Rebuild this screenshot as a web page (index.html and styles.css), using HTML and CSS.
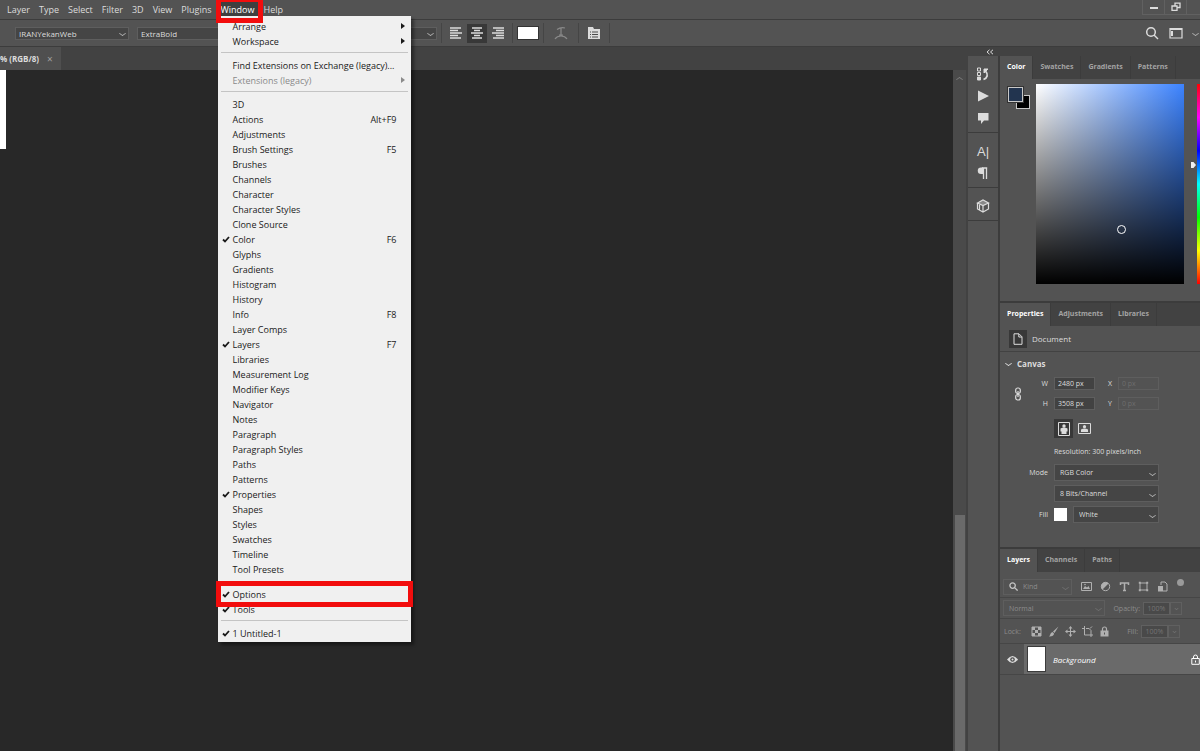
FILE: index.html
```html
<!DOCTYPE html>
<html lang="en">
<head>
    <meta charset="UTF-8">
    <meta name="viewport" content="width=device-width, initial-scale=1.0">
    <title>Untitled-1</title>
    <link rel="stylesheet" href="styles.css">
</head>
<body>
    <header class="menubar">
        <nav class="menus">
            <button>Layer</button>
            <button>Type</button>
            <button>Select</button>
            <button>Filter</button>
            <button>3D</button>
            <button>View</button>
            <button>Plugins</button>
            <div class="menu-open">
                <button class="active">Window</button>
                <div class="dropdown" id="windowMenu"></div>
                <span class="mark mark-window"></span>
            </div>
            <button>Help</button>
        </nav>
        <div class="window-buttons">
            <button aria-label="Minimize"><svg width="10" height="10" viewBox="0 0 10 10"><path d="M1 6h8" stroke="currentColor" stroke-width="2"/></svg></button>
            <button aria-label="Restore"><svg width="10" height="10" viewBox="0 0 10 10" fill="none" stroke="currentColor" stroke-width="1.3"><path d="M1 4h5v4.300H1zM4 4V1.200h5v4.300H6"/></svg></button>
            <button aria-label="Close"></button>
        </div>
    </header>

    <div class="options">
        <span class="select font-family"><select aria-label="Font family"><option>IRANYekanWeb</option></select></span>
        <span class="select font-style"><select aria-label="Font style"><option>ExtraBold</option></select></span>
        <span class="select anti-alias"><select aria-label="Anti-aliasing"><option></option></select></span>
        <div class="option-group">
            <button aria-label="Left align"><svg width="12" height="12" viewBox="0 0 12 12" stroke="currentColor" stroke-width="1.500"><path d="M0 1h11M0 3.500h8M0 6h12M0 8.500h8M0 11h11"/></svg></button>
            <button class="pressed" aria-label="Center"><svg width="12" height="12" viewBox="0 0 12 12" stroke="currentColor" stroke-width="1.500"><path d="M1 1h10M3 3.500h6M0 6h12M3 8.500h6M1 11h10"/></svg></button>
            <button aria-label="Right align"><svg width="12" height="12" viewBox="0 0 12 12" stroke="currentColor" stroke-width="1.500"><path d="M1 1h11M4 3.500h8M0 6h12M4 8.500h8M1 11h11"/></svg></button>
        </div>
        <div class="option-group"><button class="text-color" aria-label="Text color"></button></div>
        <div class="option-group dim">
            <button aria-label="Warp text"><svg width="14" height="14" viewBox="0 0 14 14" fill="none" stroke="currentColor" stroke-width="1.200"><path d="M3 3.500Q7 .8 11 2M7 2v7M5 9h4M1 13q2-3 6-3t6 3"/></svg></button>
        </div>
        <div class="option-group">
            <button aria-label="Character panel"><svg width="14" height="14" viewBox="0 0 14 14"><path fill="currentColor" d="M1 1h5l1 2h6v10H1z"/><path stroke="#4a4a4a" d="M3 6h1M5 6h6M3 8.500h1M5 8.500h6M3 11h1M5 11h6"/></svg></button>
        </div>
        <div class="option-right">
            <button aria-label="Search"><svg width="14" height="14" viewBox="0 0 14 14" fill="none" stroke="currentColor" stroke-width="1.500"><circle cx="6" cy="6" r="4.300"/><path d="M9 9l4 4"/></svg></button>
            <button aria-label="Workspace"><svg width="14" height="12" viewBox="0 0 14 12"><path fill="none" stroke="currentColor" stroke-width="1.200" d="M1 1.500h12v9.500H1z"/><path fill="currentColor" d="M1 1h12v2H1zM2 4h2v5H2z"/></svg></button>
            <i class="chevron"></i>
        </div>
    </div>

    <div class="workspace">
        <main class="document">
            <div class="doc-tabs"><button>% (RGB/8)<span>×</span></button></div>
            <div class="doc-body">
                <div class="canvas"><div class="page"></div></div>
                <div class="scrollbar"><i class="chevron up"></i><div class="thumb"></div></div>
            </div>
        </main>

        <aside class="dock">
            <div class="dock-top"><svg width="8" height="6" viewBox="0 0 8 6" fill="none" stroke="currentColor"><path d="M3.500 .8L1 3l2.500 2.200M7 .8L4.500 3 7 5.200"/></svg></div>
            <div class="dock-body">
                <div class="icon-column">
                    <div class="icon-group">
                        <button aria-label="History"><svg width="14" height="14" viewBox="0 0 14 14" fill="none" stroke="currentColor"><path d="M1.500 1h3v3h-3zM1.500 5.500h3v3h-3z"/><path fill="currentColor" d="M1.500 10h3v3h-3z"/><path stroke-width="1.800" d="M7.500 12.500c4-1.500 5-5 2-8.500"/><path fill="currentColor" d="M8 2h4l-4 4z"/></svg></button>
                        <button aria-label="Actions"><svg width="14" height="14" viewBox="0 0 14 14" fill="currentColor"><path d="M2 1.500L13 7 2 12.500z"/></svg></button>
                        <button aria-label="Comments"><svg width="14" height="14" viewBox="0 0 14 14" fill="currentColor"><path d="M2 2h10.500v7.500H8L5 13V9.500H2z"/></svg></button>
                    </div>
                    <div class="icon-group">
                        <button class="letter" aria-label="Character">A|</button>
                        <button aria-label="Paragraph"><svg width="14" height="14" viewBox="0 0 14 14"><path fill="currentColor" d="M7 1.500H5a3.200 3.200 0 0 0 0 6.500h2z"/><path stroke="currentColor" stroke-width="1.300" d="M7.500 1.500V13M10.500 1.500V13M6 2h5.200"/></svg></button>
                    </div>
                    <div class="icon-group">
                        <button aria-label="3D"><svg width="14" height="14" viewBox="0 0 14 14" fill="none" stroke="currentColor" stroke-width="1.200"><path fill="#888" d="M1.500 4L7 1l5.500 3L7 6.500z"/><path d="M1.500 4v6L7 13l5.500-3V4M7 6.500V13M3.500 5.500v5.500"/></svg></button>
                    </div>
                </div>

                <div class="panels">
                    <section class="panel color-panel">
                        <div class="tabs"><button class="current">Color</button><button>Swatches</button><button>Gradients</button><button>Patterns</button></div>
                        <div class="color-body">
                            <div class="chips"><i class="chip back"></i><i class="chip front"></i></div>
                            <div class="spectrum"><i class="picker"></i></div>
                            <i class="hue-arrow"></i>
                            <div class="hue"></div>
                        </div>
                    </section>

                    <section class="panel properties-panel">
                        <div class="tabs"><button class="current">Properties</button><button>Adjustments</button><button>Libraries</button></div>
                        <div class="doc-kind">
                            <span class="doc-icon"><svg width="12" height="12" viewBox="0 0 12 12" fill="none" stroke="currentColor"><path d="M2 .8h5l3 3v7.500H2zM6.800 1v3H10"/></svg></span>
                            Document
                        </div>
                        <div class="canvas-head"><i class="chevron"></i><b>Canvas</b></div>
                        <div class="dims">
                            <svg class="link" width="8" height="14" viewBox="0 0 8 14" fill="none" stroke="currentColor" stroke-width="1.200"><rect x="1.700" y="1" width="4.600" height="5.500" rx="2"/><rect x="1.700" y="7.500" width="4.600" height="5.500" rx="2"/><path d="M4 4v6"/></svg>
                            <label for="w">W</label><input id="w" value="2480 px">
                            <label for="x">X</label><input id="x" value="0 px" disabled>
                            <label for="h">H</label><input id="h" value="3508 px">
                            <label for="y">Y</label><input id="y" value="0 px" disabled>
                        </div>
                        <div class="orientation">
                            <button class="pressed" aria-label="Portrait"><svg width="12" height="14" viewBox="0 0 12 14"><path fill="none" stroke="currentColor" d="M.5 .5h11v13H.5z"/><circle cx="6" cy="4" r="1.700" fill="currentColor"/><path fill="currentColor" d="M2.500 6.500q3.500-2 7 0v3H8.500V12h-5V9.500h-1z"/></svg></button>
                            <button aria-label="Landscape"><svg width="13" height="11" viewBox="0 0 13 11"><path fill="none" stroke="currentColor" d="M.5 .5h12v10H.5z"/><circle cx="6.500" cy="3.700" r="1.600" fill="currentColor"/><path fill="currentColor" d="M3 9V6.500q3.500-2 7 0V9z"/></svg></button>
                        </div>
                        <div class="resolution">Resolution: 300 pixels/inch</div>
                        <div class="prop-row"><label for="mode">Mode</label><span class="select"><select id="mode"><option>RGB Color</option></select></span></div>
                        <div class="prop-row"><label for="bits"></label><span class="select"><select id="bits" aria-label="Bit depth"><option>8 Bits/Channel</option></select></span></div>
                        <div class="prop-row"><label for="fill">Fill</label><i class="fill-color"></i><span class="select"><select id="fill"><option>White</option></select></span></div>
                    </section>

                    <section class="panel layers-panel">
                        <div class="tabs"><button class="current">Layers</button><button>Channels</button><button>Paths</button></div>
                        <div class="layer-row filter-row">
                            <span class="select kind"><svg width="9" height="9" viewBox="0 0 9 9" fill="none" stroke="#c4c4c4" stroke-width="1.300"><circle cx="3.600" cy="3.600" r="2.700"/><path d="M5.600 5.600l3 3"/></svg><select aria-label="Filter type"><option>Kind</option></select></span>
                            <div class="filters">
                                <button aria-label="Pixel layers"><svg width="11" height="11" viewBox="0 0 11 11"><path fill="none" stroke="currentColor" d="M.5 1.500h10v8H.5z"/><path fill="currentColor" d="M2 8l2-3 2 1.500L7.500 5 9 8z"/><circle cx="4" cy="3.500" r=".8" fill="currentColor"/></svg></button>
                                <button aria-label="Adjustment layers"><svg width="11" height="11" viewBox="0 0 11 11"><circle cx="5.500" cy="5.500" r="4.200" fill="none" stroke="currentColor"/><path fill="currentColor" d="M8.500 2.500a4.200 4.200 0 0 0-6 6z"/></svg></button>
                                <button aria-label="Type layers"><svg width="11" height="11" viewBox="0 0 11 11" fill="none" stroke="currentColor" stroke-width="1.500"><path d="M1.500 4V2h8v2M5.500 2v8M4 9.500h3"/></svg></button>
                                <button aria-label="Shape layers"><svg width="11" height="11" viewBox="0 0 11 11" fill="none" stroke="currentColor"><path d="M2 2h7v7H2z"/><path fill="currentColor" d="M.8 .8h2v2h-2zM8.200 .8h2v2h-2zM.8 8.200h2v2h-2zM8.200 8.200h2v2h-2z" stroke="none"/></svg></button>
                                <button aria-label="Smart objects"><svg width="11" height="11" viewBox="0 0 11 11"><path fill="none" stroke="currentColor" d="M4 4V1h4l2 2v7H6"/><path fill="currentColor" d="M1 5h5v5.500H1z"/></svg></button>
                            </div>
                            <i class="toggle"></i>
                        </div>
                        <div class="layer-row blend-row">
                            <span class="select blend"><select aria-label="Blend mode"><option>Normal</option></select></span>
                            <label for="opacity">Opacity:</label>
                            <input id="opacity" value="100%" disabled><button class="stepper" aria-label="Opacity slider"><i class="chevron"></i></button>
                        </div>
                        <div class="layer-row lock-row">
                            <span class="lock-label">Lock:</span>
                            <div class="locks">
                                <button aria-label="Lock transparency"><svg width="11" height="11" viewBox="0 0 11 11"><path fill="none" stroke="currentColor" d="M1 1h9v9H1z"/><path fill="currentColor" d="M1 1h3v3H1zM7 1h3v3H7zM4 4h3v3H4zM1 7h3v3H1zM7 7h3v3H7z"/></svg></button>
                                <button aria-label="Lock pixels"><svg width="11" height="11" viewBox="0 0 11 11" fill="currentColor"><path d="M10.500 .5L6.500 7 5 5.500zM4.500 6l1.500 1.500c0 2-2 3.200-5 3 1.500-1 1-4 3.500-4.500z"/></svg></button>
                                <button aria-label="Lock position"><svg width="11" height="11" viewBox="0 0 11 11"><path stroke="currentColor" d="M5.500 1v9M1 5.500h9"/><path fill="currentColor" d="M5.500 0l2 2.500h-4zM5.500 11l2-2.500h-4zM0 5.500l2.500-2v4zM11 5.500l-2.500-2v4z"/></svg></button>
                                <button aria-label="Lock artboard"><svg width="11" height="11" viewBox="0 0 11 11" fill="none" stroke="currentColor"><path d="M2.500 0v9H11M0 2.500h2M4 2.500h3l2 2V11M8 2.500L10 .5"/></svg></button>
                                <button aria-label="Lock all"><svg width="11" height="11" viewBox="0 0 11 11"><path fill="currentColor" d="M1.500 4.500h8V10.500h-8z"/><path fill="none" stroke="currentColor" stroke-width="1.200" d="M3.500 5V3a2 2 0 0 1 4 0v2"/><path fill="#535353" d="M5 6.500h1v2H5z"/></svg></button>
                            </div>
                            <label for="layerFill">Fill:</label>
                            <input id="layerFill" value="100%" disabled><button class="stepper" aria-label="Fill slider"><i class="chevron"></i></button>
                        </div>
                        <div class="layer">
                            <button class="eye" aria-label="Visibility"><svg width="11" height="9" viewBox="0 0 11 9"><path fill="currentColor" d="M0 4.500Q5.500-2.500 11 4.500 5.500 11.500 0 4.500z"/><circle cx="5.500" cy="4.500" r="2.300" fill="#4d4d4d"/><circle cx="5.500" cy="4.500" r="1" fill="currentColor"/></svg></button>
                            <div class="layer-name"><i class="layer-thumb"></i><em>Background</em>
                                <svg width="9" height="11" viewBox="0 0 9 11" fill="none" stroke="currentColor"><path d="M.8 4.500h7.500v5.800H.8zM2.500 4.500V3a2 2 0 0 1 4 0v1.500M4.500 6.500v2"/></svg></div>
                        </div>
                    </section>
                </div>
            </div>
        </aside>
    </div>

    <script src="script.js"></script>
</body>
</html>
```

FILE: styles.css
```css
* {
    box-sizing: border-box;
}
body {
    margin: 0;
    height: 100vh;
    display: flex;
    flex-direction: column;
    overflow: hidden;
    background-color: #282828;
    color: #dcdcdc;
    font-family: 'Open Sans', 'Noto Sans', sans-serif;
    font-size: 7px;
}
button, input, select {
    font: inherit;
    color: inherit;
    background: none;
    border: none;
    border-radius: 0;
    margin: 0;
    padding: 0;
}
button {
    display: flex;
    align-items: center;
    justify-content: center;
    flex: none;
}
svg {
    display: block;
    flex: none;
}
.chevron {
    flex: none;
    width: 5px;
    height: 5px;
    border-right: 1px solid currentColor;
    border-bottom: 1px solid currentColor;
    transform: scaleY(0.7) rotate(45deg);
}
.chevron.up {
    transform: scaleY(0.7) rotate(225deg);
}

/* drop-downs */
.select {
    position: relative;
    display: flex;
    align-items: center;
    background-color: #454545;
    border: 1px solid #5e5e5e;
}
.select select {
    appearance: none;
    flex: 1;
    min-width: 0;
    height: 100%;
    padding: 0 5px;
    opacity: 1;
}
.select::after {
    content: "";
    position: absolute;
    right: 3px;
    top: 50%;
    width: 4px;
    height: 4px;
    margin-top: -2px;
    border-right: 1px solid #b0b0b0;
    border-bottom: 1px solid #b0b0b0;
    transform: scaleY(0.7) rotate(45deg);
    pointer-events: none;
}

/* menu bar */
.menubar {
    display: flex;
    justify-content: space-between;
    flex: none;
    height: 20px;
    background-color: #535353;
    border-bottom: 1px solid #3c3c3c;
    font-size: 9px;
}
.menus {
    display: flex;
    padding-left: 3px;
}
.menus button {
    height: 18px;
    padding: 0 5px 0 4px;
}
.menu-open {
    position: relative;
}
.menu-open .active {
    background-color: #3f3f3f;
    color: #fff;
}
.mark {
    position: absolute;
    border: 5px solid #f20d0d;
    pointer-events: none;
    z-index: 3;
}
.mark-window {
    inset: -3px -3px -4px -1px;
}
.window-buttons {
    display: flex;
}
.window-buttons button {
    width: 22px;
    height: 15px;
    border: 1px solid #616161;
    border-top: none;
    border-right: none;
}
.window-buttons button:last-child {
    width: 14px;
}

/* Window menu */
.dropdown {
    position: absolute;
    left: 1px;
    top: 16px;
    width: 193px;
    padding: 3px 0 1px;
    background-color: #f0f0f0;
    color: #1a1a1a;
    box-shadow: 3px 3px 3px rgba(0, 0, 0, 0.4);
    z-index: 2;
}
.menu-group {
    margin: 0 3px;
}
.menu-group + .menu-group {
    border-top: 1px solid #c4c4c4;
    margin-top: 3px;
    padding-top: 5px;
}
.menu-group.long {
    padding-bottom: 1px;
}
.menus .item {
    position: relative;
    width: 100%;
    height: 15px;
    padding: 0 11px 0 12px;
    justify-content: space-between;
    white-space: nowrap;
}
.menus .item:disabled {
    color: #8a8a8a;
}
.item .tick {
    position: absolute;
    left: 1px;
    top: 4px;
}
.item .arrow {
    position: absolute;
    right: 3px;
    top: 4px;
    border: 3px solid transparent;
    border-left: 4px solid currentColor;
    border-right: none;
}
.item .mark {
    inset: -6px -5px -5px;
}

/* options bar */
.options {
    display: flex;
    align-items: center;
    flex: none;
    height: 27px;
    padding-left: 15px;
    background-color: #535353;
    border-bottom: 1px solid #3c3c3c;
    font-size: 8px;
}
.options .select {
    height: 13px;
    margin-right: 8px;
}
.options select {
    padding: 0 3px;
}
.options .font-family {
    width: 114px;
}
.options .font-style {
    width: 110px;
}
.options .anti-alias {
    width: 182px;
    margin-right: 4px;
}
.option-group {
    display: flex;
    align-items: center;
    gap: 1px;
    height: 20px;
    padding: 0 4px;
    border-left: 1px solid #454545;
}
.option-group button {
    width: 20px;
    height: 19px;
}
.option-group .text-color {
    width: 22px;
    height: 14px;
    background-color: #fff;
    border: 1px solid #333;
}
.option-group.dim {
    color: #8a8a8a;
    padding: 0 7px;
}
.option-group.dim + .option-group {
    padding: 0 5px;
    border-right: 1px solid #454545;
}
.pressed {
    background-color: #383838;
}
.option-right {
    display: flex;
    align-items: center;
    gap: 10px;
    margin-left: auto;
    padding-right: 2px;
}
.option-right .chevron {
    color: #b0b0b0;
}

/* document */
.workspace {
    display: flex;
    flex: 1;
    min-height: 0;
}
.document {
    display: flex;
    flex-direction: column;
    flex: 1;
    min-width: 0;
}
.doc-tabs {
    flex: none;
    height: 23px;
    background-color: #424242;
}
.doc-tabs button {
    height: 23px;
    padding-right: 8px;
    gap: 8px;
    background-color: #4f4f4f;
    font-size: 8px;
    font-weight: bold;
}
.doc-tabs span {
    color: #a0a0a0;
    font-size: 10px;
    font-weight: normal;
}
.doc-body {
    display: flex;
    flex: 1;
    min-height: 0;
}
.canvas {
    flex: 1;
    background-color: #282828;
}
.page {
    width: 6px;
    height: 79px;
    background-color: #fff;
}
.scrollbar {
    display: flex;
    flex-direction: column;
    align-items: center;
    width: 15px;
    padding-top: 7px;
    background-color: #4a4a4a;
    border-right: 2px solid #424242;
    color: #7c7c7c;
}
.scrollbar .thumb {
    width: 10px;
    height: 35%;
    margin-top: auto;
    background-color: #6a6a6a;
}

/* dock */
.dock {
    display: flex;
    flex-direction: column;
    flex: none;
    width: 232px;
    background-color: #3c3c3c;
}
.dock-top {
    flex: none;
    height: 9px;
    padding: 2px 18px;
    background-color: #424242;
}
.dock-body {
    display: flex;
    gap: 2px;
    flex: 1;
    min-height: 0;
}
.icon-column {
    width: 30px;
    background-color: #535353;
}
.icon-group {
    display: flex;
    flex-direction: column;
    align-items: center;
    padding: 7px 0 3px;
    border-bottom: 1px solid #3c3c3c;
}
.icon-group button {
    width: 22px;
    height: 22px;
}
.icon-group .letter {
    font-family: 'Liberation Sans', sans-serif;
    font-size: 13px;
}
.panels {
    display: flex;
    flex-direction: column;
    gap: 2px;
    flex: 1;
    min-width: 0;
}
.panel {
    background-color: #535353;
    overflow: hidden;
}
.tabs {
    display: flex;
    height: 23px;
    background-color: #424242;
}
.tabs button {
    padding: 0 7px 2px;
    border-right: 1px solid #3c3c3c;
    color: #a4a4a4;
    font-weight: bold;
}
.tabs .current {
    background-color: #535353;
    color: #fff;
}

/* color panel */
.color-body {
    display: flex;
    padding: 5px 0 17px 8px;
}
.chips {
    position: relative;
    width: 22px;
    height: 26px;
    margin-right: 6px;
}
.chip {
    position: absolute;
    width: 14px;
    height: 14px;
    border: 1px solid #c8c8c8;
}
.chip.front {
    left: 0;
    top: 3px;
    width: 15px;
    height: 15px;
    background-color: #22344f;
    outline: 1px solid #333;
}
.chip.back {
    right: 0;
    top: 11px;
    background-color: #000;
}
.spectrum {
    position: relative;
    flex: 1;
    height: 200px;
    background: linear-gradient(to top, #000, transparent), linear-gradient(to right, #fff, #3c83ff);
}
.picker {
    position: absolute;
    left: 55%;
    top: 141px;
    width: 9px;
    height: 9px;
    border: 1px solid #fff;
    border-radius: 50%;
}
.hue-arrow {
    width: 5px;
    height: 6px;
    margin: 78px 1px 0 7px;
    background-color: #eee;
    clip-path: polygon(0 0, 50% 0, 100% 50%, 50% 100%, 0 100%);
}
.hue {
    width: 3px;
    background: linear-gradient(#f00, #f0f, #00f, #0ff, #0f0, #ff0, #f00);
}

/* properties panel */
.properties-panel {
    flex: none;
    height: 244px;
}
.doc-kind {
    display: flex;
    align-items: center;
    gap: 5px;
    height: 26px;
    padding-left: 9px;
    border-bottom: 1px solid #424242;
    font-size: 8px;
}
.doc-icon {
    padding: 3px;
    background-color: #383838;
}
.canvas-head {
    display: flex;
    align-items: center;
    gap: 6px;
    height: 25px;
    padding: 0 0 2px 6px;
    font-size: 8px;
}
.dims {
    display: grid;
    grid-template-columns: 24px 12px 41px 11px 41px;
    align-items: center;
    gap: 7px 6px;
    padding-left: 6px;
}
.dims .link {
    grid-row: span 2;
    justify-self: center;
}
.dims label {
    text-align: right;
}
.dims input {
    width: 100%;
    height: 13px;
    padding: 0 3px;
    background-color: #424242;
    border: 1px solid #5e5e5e;
}
.dims input:disabled {
    background: none;
    color: #6e6e6e;
}
.orientation {
    display: flex;
    padding: 9px 0 8px 54px;
    gap: 2px;
}
.orientation button {
    width: 19px;
    height: 19px;
}
.resolution {
    height: 18px;
    padding: 1px 0 0 54px;
}
.prop-row {
    display: flex;
    align-items: center;
    gap: 6px;
    width: 159px;
    padding-left: 6px;
    margin-bottom: 4px;
}
.prop-row label {
    width: 42px;
    text-align: right;
}
.prop-row .select {
    flex: 1;
    height: 17px;
}
.fill-color {
    width: 13px;
    height: 13px;
    background-color: #fff;
}

/* layers panel */
.layers-panel {
    flex: 1;
}
.layer-row {
    display: flex;
    align-items: center;
    height: 21px;
    padding-left: 3px;
    border-bottom: 1px solid #464646;
    color: #8c8c8c;
}
.layer-row.filter-row {
    height: 26px;
    padding-top: 4px;
}
.layer-row.lock-row {
    height: 25px;
}
.layer-row .select {
    height: 16px;
    background: none;
}
.layer-row .select::after {
    border-color: #6e6e6e;
}
.kind {
    width: 69px;
    padding-left: 5px;
}
.blend {
    width: 102px;
}
.layer-row label {
    width: 34px;
    padding-right: 3px;
    margin-left: 4px;
    text-align: right;
}
.layer-row input {
    width: 27px;
    height: 13px;
    text-align: center;
    background-color: #494949;
    border: 1px solid #606060;
    color: #757575;
}
.stepper {
    width: 12px;
    height: 13px;
    border: 1px solid #606060;
}
.stepper .chevron {
    width: 3px;
    height: 3px;
    color: #6e6e6e;
}
.filters {
    display: flex;
    gap: 8px;
    margin-left: 9px;
    color: #b0b0b0;
}
.toggle {
    width: 7px;
    height: 7px;
    margin: 0 0 9px 9px;
    border-radius: 50%;
    background-color: #9a9a9a;
}
.locks {
    display: flex;
    gap: 6px;
    color: #b0b0b0;
}
.lock-label {
    width: 28px;
    padding-left: 1px;
}
.layer-row.lock-row label {
    width: 27px;
}
.layer {
    display: flex;
    height: 31px;
    border-bottom: 1px solid #464646;
    font-size: 8px;
}
.eye {
    width: 24px;
}
.layer-name {
    display: flex;
    align-items: center;
    flex: 1;
    padding-left: 3px;
    background-color: #6a6a6a;
    color: #fff;
}
.layer-thumb {
    width: 19px;
    height: 26px;
    margin-right: 7px;
    background-color: #fff;
    border: 1px solid #3c3c3c;
}
.layer-name svg {
    margin-left: auto;
}
```

FILE: script.js
```
const groups = [
    [['Arrange', '>'], ['Workspace', '>']],
    [['Find Extensions on Exchange (legacy)...'], ['Extensions (legacy)', '>', 'off']],
    [
        ['3D'], ['Actions', 'Alt+F9'], ['Adjustments'], ['Brush Settings', 'F5'], ['Brushes'],
        ['Channels'], ['Character'], ['Character Styles'], ['Clone Source'], ['Color', 'F6', 'on'],
        ['Glyphs'], ['Gradients'], ['Histogram'], ['History'], ['Info', 'F8'], ['Layer Comps'],
        ['Layers', 'F7', 'on'], ['Libraries'], ['Measurement Log'], ['Modifier Keys'], ['Navigator'],
        ['Notes'], ['Paragraph'], ['Paragraph Styles'], ['Paths'], ['Patterns'],
        ['Properties', '', 'on'], ['Shapes'], ['Styles'], ['Swatches'], ['Timeline'], ['Tool Presets']
    ],
    [['Options', '', 'on', 'marked'], ['Tools', '', 'on']],
    [['1 Untitled-1', '', 'on']]
];

const tick = '<svg class="tick" width="8" height="7" viewBox="0 0 8 7" fill="none" stroke="currentColor" stroke-width="1.8"><path d="M1 3.500l2 2L7 1"/></svg>';

document.getElementById('windowMenu').innerHTML = groups.map(group => {
    const items = group.map(([name, key, state, marked]) => `
        <button class="item" ${state === 'off' ? 'disabled' : ''}>
            ${state === 'on' ? tick : ''}<span>${name}</span>
            ${key === '>' ? '<i class="arrow"></i>' : `<span>${key || ''}</span>`}
            ${marked ? '<span class="mark"></span>' : ''}
        </button>`).join('');
    return `<div class="menu-group ${group.length > 10 ? 'long' : ''}">${items}</div>`;
}).join('');
```
